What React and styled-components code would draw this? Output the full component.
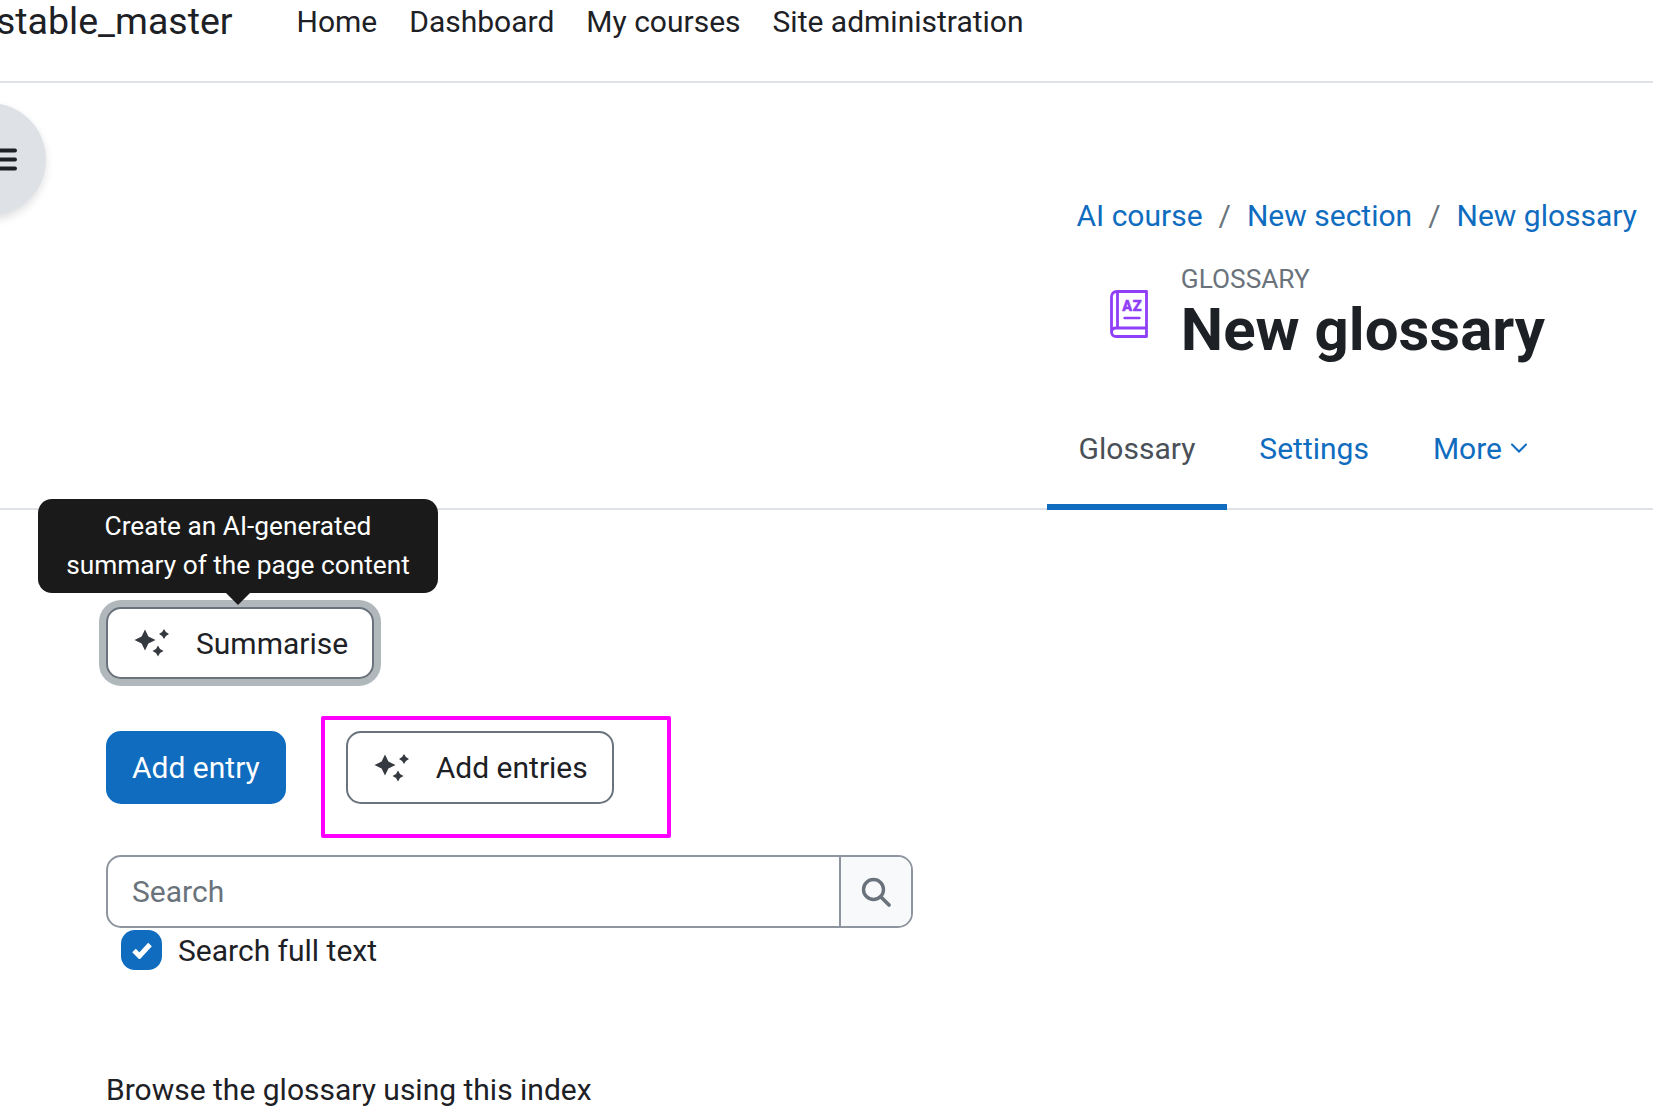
import React from 'react'
import styled, { createGlobalStyle } from 'styled-components'

const navLinks = ['Home', 'Dashboard', 'My courses', 'Site administration']
const crumbs = ['AI course', 'New section', 'New glossary']

const SparkleIcon = () => (
  <SparkleSvg viewBox="0 0 34 28" aria-hidden="true">
    <path d="M10 0.5 L13.4 7.6 L20.5 11 L13.4 14.4 L10 21.5 L6.6 14.4 L-0.5 11 L6.6 7.6 Z" />
    <path d="M29 0 L30.9 3.1 L34 5 L30.9 6.9 L29 10 L27.1 6.9 L24 5 L27.1 3.1 Z" />
    <path d="M23 16.5 L25 20 L28.5 22 L25 24 L23 27.5 L21 24 L17.5 22 L21 20 Z" />
  </SparkleSvg>
)

const GlossaryIcon = () => (
  <BookSvg viewBox="0 0 38 48" aria-hidden="true">
    <path
      d="M7 1.5 H36.5 V46.5 H6 C3.2 46.5 1.5 44.6 1.5 42 V7 C1.5 3.8 3.6 1.5 7 1.5 Z M7.5 1.5 V38 M1.5 42 C1.5 39.6 3.4 38 6 38 H36.5"
      fill="none"
      stroke="#8f3ff7"
      strokeWidth="2.8"
      strokeLinejoin="round"
    />
    <text x="22.2" y="21" textAnchor="middle" fontFamily="Roboto, sans-serif" fontWeight="900" fontSize="14.5" letterSpacing="0.5" fill="#8f3ff7" stroke="#8f3ff7" strokeWidth="0.4">
      AZ
    </text>
    <path d="M14.5 28 H29.5" stroke="#8f3ff7" strokeWidth="2.4" strokeLinecap="round" />
  </BookSvg>
)

const App = () => (
  <Page>
    <GlobalStyle />
    <Header>
      <Brand>stable_master</Brand>
      <Nav>
        {navLinks.map((text) => (
          <NavLink key={text}>{text}</NavLink>
        ))}
      </Nav>
    </Header>

    <DrawerToggle>
      <svg width="54" height="30" viewBox="0 0 54 30" aria-hidden="true">
        <rect x="0" y="3.5" width="54" height="4" rx="2" fill="#1d2125" />
        <rect x="0" y="12.5" width="54" height="4" rx="2" fill="#1d2125" />
        <rect x="0" y="21.5" width="54" height="4" rx="2" fill="#1d2125" />
      </svg>
    </DrawerToggle>

    <PageHead>
      <Breadcrumb>
        {crumbs.map((text, index) => (
          <React.Fragment key={text}>
            {index > 0 && <CrumbSep>/</CrumbSep>}
            <Link>{text}</Link>
          </React.Fragment>
        ))}
      </Breadcrumb>
      <Heading>
        <GlossaryIcon />
        <div>
          <Kicker>GLOSSARY</Kicker>
          <Title>New glossary</Title>
        </div>
      </Heading>
    </PageHead>

    <Tabs>
      <Tab $active>Glossary</Tab>
      <Tab>Settings</Tab>
      <Tab>
        More
        <svg width="18" height="12" viewBox="0 0 18 12" aria-hidden="true">
          <path d="M2 2.5 L9 9.5 L16 2.5" fill="none" stroke="#0f6cbf" strokeWidth="2" strokeLinecap="round" />
        </svg>
      </Tab>
    </Tabs>

    <Content>
      <SummariseWrap>
        <Tooltip>
          Create an AI-generated
          <br />
          summary of the page content
        </Tooltip>
        <OutlineButton $focused>
          <SparkleIcon />
          Summarise
        </OutlineButton>
      </SummariseWrap>

      <ActionRow>
        <PrimaryButton>Add entry</PrimaryButton>
        <Highlight>
          <OutlineButton>
            <SparkleIcon />
            Add entries
          </OutlineButton>
        </Highlight>
      </ActionRow>

      <SearchBox>
        <SearchText>Search</SearchText>
        <SearchButton>
          <svg width="32" height="32" viewBox="0 0 32 32" aria-hidden="true">
            <circle cx="13.5" cy="13.5" r="10" fill="none" stroke="#6a737b" strokeWidth="3.4" />
            <path d="M21 21 L29 29" stroke="#6a737b" strokeWidth="3.8" strokeLinecap="round" />
          </svg>
        </SearchButton>
      </SearchBox>

      <CheckRow>
        <CheckBox>
          <svg width="22" height="18" viewBox="0 0 22 18" aria-hidden="true">
            <path d="M3 9.5 L8.5 15 L19 3.5" fill="none" stroke="#fff" strokeWidth="5" />
          </svg>
        </CheckBox>
        <CheckLabel>Search full text</CheckLabel>
      </CheckRow>

      <BrowseText>Browse the glossary using this index</BrowseText>
    </Content>
  </Page>
)

export default App

const GlobalStyle = createGlobalStyle`
  body {
    margin: 0;
    background: #fff;
    color: #1d2125;
    font-family: Roboto, "Liberation Sans", sans-serif;
    font-size: 30px;
    line-height: 45px;
  }
`

const Page = styled.div`
  position: relative;
  height: 100vh;
  overflow: hidden;
`

const Header = styled.header`
  display: flex;
  align-items: flex-start;
  height: 83px;
  box-sizing: border-box;
  border-bottom: 2px solid #dee2e6;
`

const Brand = styled.div`
  font-size: 37.5px;
  line-height: 45px;
  margin: -1px 0 0 -4px;
`

const Nav = styled.nav`
  display: flex;
  gap: 32px;
  margin: -1px 0 0 64px;
`

const NavLink = styled.span`
  color: #1d2125;
`

const DrawerToggle = styled.div`
  position: absolute;
  top: 103px;
  left: -67px;
  width: 113px;
  height: 113px;
  border-radius: 50%;
  background: #dee2e6;
  box-shadow: 0 4px 8px rgba(0, 0, 0, 0.12);
  display: flex;
  align-items: center;
  justify-content: center;
`

const PageHead = styled.div`
  display: flex;
  flex-direction: column;
  align-items: flex-end;
  padding-right: 16px;
`

const Breadcrumb = styled.div`
  display: flex;
  gap: 16px;
  margin-top: 110px;
`

const Link = styled.span`
  color: #0f6cbf;
`

const CrumbSep = styled.span`
  color: #6a737b;
`

const Heading = styled.div`
  display: flex;
  align-items: center;
  gap: 33px;
  margin-right: 92px;
  margin-top: 22px;
`

const BookSvg = styled.svg`
  width: 38px;
  height: 48px;
  margin-top: 4px;
`

const Kicker = styled.div`
  color: #6a737b;
  font-size: 26.25px;
  line-height: 39px;
`

const Title = styled.h1`
  margin: -2px 0 2px;
  font-size: 60px;
  font-weight: 700;
  line-height: 65px;
`

const Tabs = styled.div`
  display: flex;
  justify-content: flex-end;
  padding-right: 93px;
  margin-top: 48px;
  border-bottom: 2px solid #dee2e6;
`

const Tab = styled.div`
  display: flex;
  align-items: center;
  gap: 8px;
  height: 98px;
  box-sizing: border-box;
  padding: 0 32px 20px;
  color: ${(props) => (props.$active ? '#495057' : '#0f6cbf')};
  border-bottom: 6px solid ${(props) => (props.$active ? '#0f6cbf' : 'transparent')};
  margin-bottom: -2px;
`

const Content = styled.main`
  padding-left: 106px;
`

const SummariseWrap = styled.div`
  position: relative;
  width: max-content;
  margin-top: 97px;
`

const Tooltip = styled.div`
  position: absolute;
  left: -68px;
  bottom: calc(100% + 14px);
  width: 400px;
  box-sizing: border-box;
  padding: 8px 0;
  background: #1a1a1a;
  color: #fff;
  border-radius: 14px;
  font-size: 26.25px;
  line-height: 39px;
  text-align: center;
  white-space: nowrap;
  &::after {
    content: '';
    position: absolute;
    top: 100%;
    left: 50%;
    margin-left: -12px;
    border-style: solid;
    border-width: 12px 12px 0;
    border-color: #1a1a1a transparent transparent;
  }
`

const ButtonBase = styled.button`
  font: inherit;
  display: inline-flex;
  align-items: center;
  box-sizing: border-box;
  border-radius: 15px;
`

const OutlineButton = styled(ButtonBase)`
  gap: 27px;
  height: ${(props) => (props.$focused ? '72px' : '73px')};
  padding: 0 24px 0 27px;
  background: #fff;
  color: #1d2125;
  border: 2px solid #6a737b;
  box-shadow: ${(props) => (props.$focused ? '0 0 0 7px #b1b8bc' : 'none')};
`

const SparkleSvg = styled.svg`
  width: 34px;
  height: 28px;
  fill: #343a40;
  overflow: visible;
`

const PrimaryButton = styled(ButtonBase)`
  height: 73px;
  margin-top: 15px;
  padding: 0 26px;
  background: #0f6cbf;
  color: #fff;
  border: 0;
`

const ActionRow = styled.div`
  display: flex;
  align-items: flex-start;
  gap: 35px;
  margin-top: 37px;
`

const Highlight = styled.div`
  box-sizing: border-box;
  width: 350px;
  height: 122px;
  padding: 11px 0 0 21px;
  border: 4px solid #ff00ff;
  border-radius: 2px;
`

const SearchBox = styled.div`
  display: flex;
  width: 807px;
  height: 73px;
  box-sizing: border-box;
  margin-top: 17px;
  border: 2px solid #8f959e;
  border-radius: 15px;
  overflow: hidden;
`

const SearchText = styled.div`
  flex: 1;
  padding-left: 24px;
  line-height: 70px;
  color: #6a737b;
`

const SearchButton = styled.div`
  width: 70px;
  display: flex;
  align-items: center;
  justify-content: center;
  background: #f8f9fa;
  border-left: 2px solid #8f959e;
`

const CheckRow = styled.div`
  display: flex;
  align-items: center;
  gap: 16px;
  margin: -1px 0 0 15px;
`

const CheckBox = styled.div`
  width: 41px;
  height: 40px;
  border-radius: 14px;
  background: #0f6cbf;
  display: flex;
  align-items: center;
  justify-content: center;
`

const CheckLabel = styled.span`
  padding-top: 1px;
`

const BrowseText = styled.p`
  margin: 94px 0 0;
`
